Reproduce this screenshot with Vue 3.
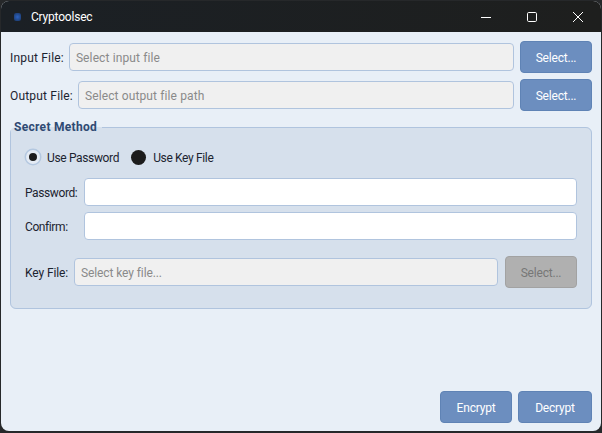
<template>
  <div class="window">
    <header class="titlebar">
      <span class="app-icon"></span>
      <span class="app-title">Cryptoolsec</span>
      <div class="controls">
        <svg class="ctl" width="12" height="12" viewBox="0 0 12 12"><path d="M1 6.5h10" stroke="#fff" fill="none" /></svg>
        <svg class="ctl" width="12" height="12" viewBox="0 0 12 12"><rect x="1.5" y="1.5" width="9" height="9" rx="1.2" stroke="#fff" fill="none" /></svg>
        <svg class="ctl" width="12" height="12" viewBox="0 0 12 12"><path d="M1 1l10 10M11 1L1 11" stroke="#fff" fill="none" /></svg>
      </div>
    </header>

    <main class="content">
      <div v-for="row in fileRows" :key="row.label" class="file-row">
        <label class="lbl">{{ row.label }}</label>
        <input class="field" type="text" readonly :placeholder="row.placeholder" />
        <button class="btn">Select...</button>
      </div>

      <fieldset class="group">
        <legend>Secret Method</legend>
        <div class="radios">
          <span class="radio-item">
            <span class="radio checked"></span>
            <span class="radio-text">Use Password</span>
          </span>
          <span class="radio-item">
            <span class="radio"></span>
            <span class="radio-text">Use Key File</span>
          </span>
        </div>
        <div class="pw-row">
          <label class="lbl">Password:</label>
          <input class="field white" type="password" />
        </div>
        <div class="pw-row">
          <label class="lbl">Confirm:</label>
          <input class="field white" type="password" />
        </div>
        <div class="key-row">
          <label class="lbl">Key File:</label>
          <input class="field" type="text" readonly placeholder="Select key file..." />
          <button class="btn" disabled>Select...</button>
        </div>
      </fieldset>

      <div class="actions">
        <button class="btn">Encrypt</button>
        <button class="btn wide">Decrypt</button>
      </div>
    </main>
  </div>
</template>

<script setup>
const fileRows = [
  { label: "Input File:", placeholder: "Select input file" },
  { label: "Output File:", placeholder: "Select output file path" },
];
</script>

<style>
html,
body {
  margin: 0;
  background: #26282a;
}
</style>

<style scoped>
.window {
  box-sizing: border-box;
  width: 600px;
  height: 430px;
  margin: 1px 0 0 1px;
  display: flex;
  flex-direction: column;
  border-radius: 8px;
  overflow: hidden;
  background: #e8eff7;
  font-family: "Roboto", "Noto Sans", sans-serif;
  font-size: 12px;
  color: #1c2430;
}

.titlebar {
  height: 31px;
  flex: none;
  display: flex;
  align-items: center;
  background: linear-gradient(90deg, #1b2025, #1e1f1e);
  color: #fff;
}

.app-icon {
  width: 7px;
  height: 8px;
  margin-left: 13px;
  border-radius: 2px;
  background: radial-gradient(circle, #2c62c0, #1a3560);
}

.app-title {
  margin-left: 10px;
  letter-spacing: -0.2px;
}

.controls {
  margin-left: auto;
  display: flex;
  margin-right: 17px;
  gap: 34px;
}

.ctl {
  display: block;
}

.content {
  flex: 1;
  display: flex;
  flex-direction: column;
  padding: 9px 9px 8px 9px;
}

.file-row {
  display: flex;
  align-items: center;
  height: 32px;
  margin-bottom: 6px;
}

.file-row .lbl {
  letter-spacing: 0.18px;
}

.file-row .field {
  letter-spacing: 0.12px;
}

.lbl {
  margin-right: 5px;
  padding-top: 1px;
  white-space: nowrap;
}

.field {
  flex: 1;
  min-width: 0;
  box-sizing: border-box;
  height: 28px;
  padding: 1px 6px 0;
  border: 1px solid #b0c4de;
  border-radius: 4px;
  background: #f0f0f0;
  font: inherit;
  outline: none;
}

.field.white {
  background: #fff;
}

.field::placeholder {
  color: #8a8a8a;
  opacity: 1;
}

.btn {
  box-sizing: border-box;
  width: 72px;
  height: 32px;
  margin-left: 6px;
  padding: 1px 0 0;
  border: 1px solid #5f83b5;
  border-radius: 4px;
  background: #6c8ebf;
  color: #fff;
  font: inherit;
  letter-spacing: -0.2px;
}

.btn:disabled {
  margin-left: 7px;
  border-color: #a2a2a2;
  background: #b0b0b0;
  color: #777;
}

.btn.wide {
  width: 74px;
}

.group {
  box-sizing: border-box;
  height: 189px;
  margin: 3px 0 0;
  padding: 0 14px 0 14px;
  border: 1px solid #b0c4de;
  border-radius: 6px;
  background: #d6e0ec;
  min-width: 0;
}

.group legend {
  padding: 0 5px 0 3px;
  margin-left: -14px;
  font-weight: 700;
  letter-spacing: 0.3px;
  color: #2f4a73;
  line-height: 14px;
}

.radios {
  display: flex;
  gap: 12px;
  height: 20px;
  align-items: center;
  margin-top: 13px;
}

.radio-item {
  display: flex;
  align-items: center;
  gap: 7px;
}

.radio-text {
  padding-top: 1px;
  letter-spacing: -0.35px;
}

.radio {
  box-sizing: border-box;
  width: 15px;
  height: 15px;
  border-radius: 50%;
  background: #1c1c1c;
}

.radio.checked {
  width: 14px;
  height: 14px;
  margin-left: 1px;
  background: #1c1c1c;
  border: 3px solid #e4ebf4;
  box-shadow: 0 0 0 1.5px #b4c8e0;
}

.pw-row {
  display: flex;
  align-items: center;
  margin-top: 6px;
}

.radios + .pw-row {
  margin-top: 11px;
}

.key-row {
  display: flex;
  align-items: center;
  height: 32px;
  margin-top: 16px;
}

.pw-row .lbl {
  width: 53px;
  margin-right: 6px;
  letter-spacing: -0.4px;
}

.key-row .lbl {
  width: 44px;
  margin-right: 5px;
  letter-spacing: -0.1px;
}

.key-row .field {
  letter-spacing: -0.1px;
}

.actions {
  margin-top: auto;
  display: flex;
  justify-content: flex-end;
}
</style>
